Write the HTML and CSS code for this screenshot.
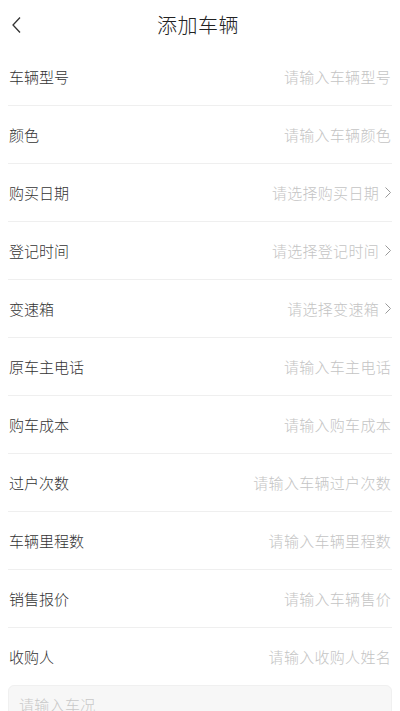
FILE: index.html
```html
<!DOCTYPE html>
<html lang="zh">
<head>
<meta charset="utf-8">
<link rel="stylesheet" href="styles.css">
</head>
<body>
<header class="nav">
  <svg class="back" width="12" height="18" viewBox="0 0 12 18"><polyline points="9,1.5 2,9 9,16.5" fill="none" stroke="#333" stroke-width="1.3"/></svg>
  <h1 class="title">添加车辆</h1>
</header>
<main class="form">
  <div class="row"><span class="label">车辆型号</span><span class="ph">请输入车辆型号</span></div>
  <div class="row"><span class="label">颜色</span><span class="ph">请输入车辆颜色</span></div>
  <div class="row"><span class="label">购买日期</span><span class="ph">请选择购买日期</span><svg class="arrow" width="8" height="13" viewBox="0 0 8 13"><polyline points="1.5,1.5 6.5,6.5 1.5,11.5" fill="none" stroke="#999" stroke-width="1"/></svg></div>
  <div class="row"><span class="label">登记时间</span><span class="ph">请选择登记时间</span><svg class="arrow" width="8" height="13" viewBox="0 0 8 13"><polyline points="1.5,1.5 6.5,6.5 1.5,11.5" fill="none" stroke="#999" stroke-width="1"/></svg></div>
  <div class="row"><span class="label">变速箱</span><span class="ph">请选择变速箱</span><svg class="arrow" width="8" height="13" viewBox="0 0 8 13"><polyline points="1.5,1.5 6.5,6.5 1.5,11.5" fill="none" stroke="#999" stroke-width="1"/></svg></div>
  <div class="row"><span class="label">原车主电话</span><span class="ph">请输入车主电话</span></div>
  <div class="row"><span class="label">购车成本</span><span class="ph">请输入购车成本</span></div>
  <div class="row"><span class="label">过户次数</span><span class="ph">请输入车辆过户次数</span></div>
  <div class="row"><span class="label">车辆里程数</span><span class="ph">请输入车辆里程数</span></div>
  <div class="row"><span class="label">销售报价</span><span class="ph">请输入车辆售价</span></div>
  <div class="row last"><span class="label">收购人</span><span class="ph">请输入收购人姓名</span></div>
  <div class="textarea"><span class="ta-ph">请输入车况</span></div>
</main>
</body>
</html>
```
FILE: styles.css
```css
html, body {
  margin: 0;
  padding: 0;
  background: #fff;
  font-family: "Noto Sans CJK SC", "Noto Sans", sans-serif;
  font-weight: 300;
}
.nav {
  height: 48px;
  position: relative;
  display: flex;
  align-items: center;
  justify-content: center;
}
.back {
  position: absolute;
  left: 11px;
  top: 16px;
}
.title {
  margin: 0;
  font-size: 20px;
  font-weight: 300;
  color: #222;
  letter-spacing: 0.5px;
  transform: translateX(-2px);
}
.form {
  padding: 0 8px;
}
.row {
  height: 57px;
  border-bottom: 1px solid #efefef;
  display: flex;
  align-items: center;
}
.row.last {
  border-bottom: none;
}
.label {
  flex: 1;
  font-size: 15px;
  color: #333;
  padding-left: 1px;
}
.ph {
  font-size: 15px;
  color: #c4c4c4;
  letter-spacing: 0.3px;
  padding-right: 1px;
}
.arrow {
  margin-left: 4px;
  margin-right: 0;
}
.textarea {
  height: 60px;
  background: #f7f7f7;
  border: 1px solid #f0f0f0;
  border-radius: 6px;
  padding: 6px 10px;
  box-sizing: border-box;
}
.ta-ph {
  font-size: 15px;
  color: #c8c8c8;
  letter-spacing: 0.3px;
}
```
